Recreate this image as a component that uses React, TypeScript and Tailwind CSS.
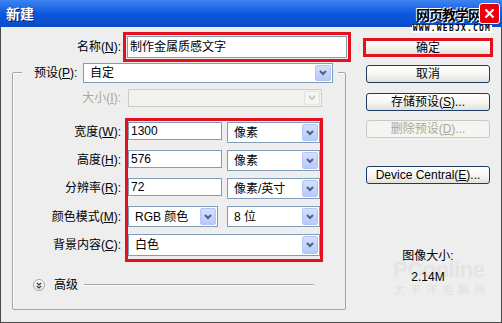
import React from 'react';

const font = "font-['Liberation_Sans','Noto_Sans_CJK_SC',sans-serif]";

function Chevron({ disabled }: { disabled?: boolean }) {
  return (
    <div
      className={
        'w-[16px] flex items-center justify-center rounded-[2px] border ' +
        (disabled ? 'bg-[#f4f4f2] border-[#e2e2de]' : 'bg-gradient-to-b from-[#d4e0fd] to-[#b6cafa] border-[#b3c5f1]')
      }
    >
      <svg width="8" height="6" viewBox="0 0 8 6">
        <path d="M1 1 L4 4 L7 1" stroke={disabled ? '#c8c8c4' : '#4d6185'} strokeWidth="2" fill="none" />
      </svg>
    </div>
  );
}

function Select({ text, w, h, disabled }: { text?: string; w: string; h: string; disabled?: boolean }) {
  return (
    <div
      className={`${w} ${h} flex p-[1px] border ${disabled ? 'bg-[#f2f2f0] border-[#cfcdc2]' : 'bg-white border-[#7f9db9]'}`}
    >
      <span className="flex-1 self-center pl-[5px] text-[12px] leading-none text-black whitespace-nowrap">{text}</span>
      <Chevron disabled={disabled} />
    </div>
  );
}

function Input({ text, w, h }: { text: string; w: string; h: string }) {
  return (
    <div className={`${w} ${h} flex items-center bg-white border border-[#7f9db9] pl-[2px] text-[12px] leading-none text-black`}>
      {text}
    </div>
  );
}

function Button({ children, disabled }: { children: React.ReactNode; disabled?: boolean }) {
  return (
    <div
      className={
        'ml-[3px] w-[124px] h-[18px] flex items-center justify-center rounded-[3px] border text-[12px] leading-none ' +
        (disabled
          ? 'border-[#cbc9bf] bg-[#f4f4f0] text-[#aca899]'
          : 'border-[#1d3c63] bg-gradient-to-b from-white via-[#f6f6f3] to-[#e2e2dc] text-black')
      }
    >
      {children}
    </div>
  );
}

function Label({ children, gray }: { children: React.ReactNode; gray?: boolean }) {
  return (
    <div className={`h-full flex items-center justify-end text-[12px] leading-none whitespace-nowrap ${gray ? 'text-[#aca899]' : 'text-black'}`}>
      {children}
    </div>
  );
}

export default function App() {
  return (
    <div className={`w-[502px] h-[323px] flex flex-col bg-[#eeeeee] ${font} overflow-hidden`}>
      {/* title bar */}
      <div className="relative h-[27px] shrink-0 bg-gradient-to-b from-[#3d84f0] via-[#0c58df] to-[#0a4cc8] flex items-center pl-[6px] pr-[2px]">
        <span className="text-white font-bold text-[14px] leading-none [text-shadow:1px_1px_0_#0a1f6b]">新建</span>
        <div className="absolute left-[416px] top-[8px] text-[14px] leading-none font-bold text-black tracking-[-1px] [text-shadow:1px_1px_0_#fff,-1px_-1px_0_#fff]">
          网页教学网
        </div>
        <div className="relative z-30 ml-auto w-[21px] h-[21px] shrink-0 rounded-[3px] border border-white bg-red-600 flex items-center justify-center">
          <svg width="11" height="11" viewBox="0 0 11 11">
            <path d="M1.5 1.5 L9.5 9.5 M9.5 1.5 L1.5 9.5" stroke="white" strokeWidth="2.2" />
          </svg>
        </div>
        <div className="absolute right-[10px] top-[25px] bg-white px-[1px] text-[8px] leading-[8px] font-bold text-black tracking-[1.2px] font-['DejaVu_Sans_Mono',monospace]">
          WWW.WEBJX.COM
        </div>
      </div>

      {/* body */}
      <div className="relative flex-1 flex border-l border-r border-b border-[#4a4a4a]">
        {/* left column */}
        <div className="w-[355px] flex flex-col pt-[5px]">
          <div className="flex items-center h-[30px]">
            <div className="w-[120px]">
              <Label>
                名称(<u>N</u>):
              </Label>
            </div>
            <div className="ml-[2px] w-[228px] h-[30px] border-[3px] border-[#e5101d] p-[1px]">
              <Input text="制作金属质感文字" w="w-full" h="h-full" />
            </div>
          </div>

          {/* group box */}
          <div className="mt-[10px] ml-[11px] w-[334px] h-[238px] border border-[#a2a2a2] rounded-[2px] shadow-[inset_1px_1px_0_#fff] flex flex-col">
            <div className="-mt-[10px] ml-[9px] w-[316px] h-[20px] bg-[#eeeeee] flex items-center pl-[12px]">
              <div className="w-[49px] text-[12px] leading-none text-black whitespace-nowrap">
                预设(<u>P</u>):
              </div>
              <Select text="自定" w="w-[250px]" h="h-[20px]" />
            </div>

            <div className="mt-[6px] h-[18px] flex">
              <div className="w-[108px]">
                <Label gray>
                  大小(<u>I</u>):
                </Label>
              </div>
              <div className="ml-[7px]">
                <Select w="w-[194px]" h="h-[18px]" disabled />
              </div>
            </div>

            <div className="mt-[11px] flex">
              <div className="w-[108px] pt-[4px] flex flex-col gap-[7px]">
                <div className="h-[19px]">
                  <Label>
                    宽度(<u>W</u>):
                  </Label>
                </div>
                <div className="h-[19px] mt-[2px]">
                  <Label>
                    高度(<u>H</u>):
                  </Label>
                </div>
                <div className="h-[19px] mt-[2px]">
                  <Label>
                    分辨率(<u>R</u>):
                  </Label>
                </div>
                <div className="h-[21px] mt-[2px]">
                  <Label>
                    颜色模式(<u>M</u>):
                  </Label>
                </div>
                <div className="h-[22px]">
                  <Label>
                    背景内容(<u>C</u>):
                  </Label>
                </div>
              </div>
              <div className="ml-[4px] w-[198px] h-[144px] border-[3px] border-[#e5101d] pt-[1px] flex flex-col gap-[7px]">
                <div className="h-[21px] flex items-start gap-[5px]">
                  <Input text="1300" w="w-[94px]" h="h-[18px]" />
                  <Select text="像素" w="w-[93px]" h="h-[21px]" />
                </div>
                <div className="h-[21px] flex items-start gap-[5px]">
                  <Input text="576" w="w-[94px]" h="h-[18px]" />
                  <Select text="像素" w="w-[93px]" h="h-[21px]" />
                </div>
                <div className="h-[21px] flex items-start gap-[5px]">
                  <Input text="72" w="w-[94px]" h="h-[18px]" />
                  <Select text="像素/英寸" w="w-[93px]" h="h-[21px]" />
                </div>
                <div className="h-[21px] flex items-start gap-[9px]">
                  <Select text="RGB 颜色" w="w-[90px]" h="h-[21px]" />
                  <Select text="8 位" w="w-[93px]" h="h-[21px]" />
                </div>
                <Select text="白色" w="w-[192px]" h="h-[22px]" />
              </div>
            </div>

            <div className="mt-[17px] h-[12px] flex items-center pl-[20px] pr-[31px]">
              <div className="w-[12px] h-[12px] rounded-full border border-[#a8a8a8] bg-gradient-to-b from-white to-[#e4e4e4] flex items-center justify-center">
                <svg width="6" height="7" viewBox="0 0 6 7">
                  <path d="M0.8 0.8 L3 3 L5.2 0.8 M0.8 3.8 L3 6 L5.2 3.8" stroke="#333" strokeWidth="1.2" fill="none" />
                </svg>
              </div>
              <span className="ml-[9px] text-[12px] leading-none text-black">高级</span>
              <div className="ml-[6px] flex-1 h-[2px] border-t border-[#a5a5a5] border-b-white border-b" />
            </div>
          </div>
        </div>

        {/* right column */}
        <div className="flex-1 flex flex-col items-start pl-[7px] pt-[11px]">
          <div className="w-[130px] h-[19px] border-[3px] border-[#e5101d] bg-gradient-to-b from-white to-[#e4e4de] flex items-center justify-center text-[12px] leading-none text-black">
            确定
          </div>
          <div className="mt-[8px]">
            <Button>取消</Button>
          </div>
          <div className="mt-[10px]">
            <Button>
              存储预设(<u>S</u>)...
            </Button>
          </div>
          <div className="mt-[9px]">
            <Button disabled>
              删除预设(<u>D</u>)...
            </Button>
          </div>
          <div className="mt-[28px]">
            <Button>
              Device Central(<u>E</u>)...
            </Button>
          </div>

          <div className="relative mt-[65px] w-[130px] flex flex-col items-center">
            <div className="absolute top-[10px] left-[30px] text-[22px] leading-none font-bold text-[#e4e4e4] tracking-[-0.5px]">PConline</div>
            <div className="absolute top-[36px] left-[31px] text-[11px] leading-none text-[#e2e2e2] tracking-[5px]">太平洋电脑网</div>
            <span className="relative text-[12px] leading-[14px] text-black">图像大小:</span>
            <span className="relative mt-[7px] text-[12px] leading-[14px] text-black">2.14M</span>
          </div>
        </div>
      </div>
    </div>
  );
}
